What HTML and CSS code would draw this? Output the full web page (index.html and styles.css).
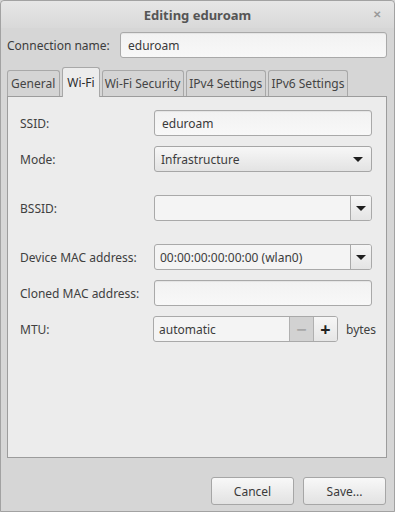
FILE: index.html
```html
<!DOCTYPE html>
<html lang="en">

<head>
    <meta charset="UTF-8">
    <title>Editing eduroam</title>
    <link rel="stylesheet" href="styles.css">
</head>

<body>
    <div class="window">
        <div class="titlebar">
            <span class="title">Editing eduroam</span>
            <span class="close">&#x2715;</span>
        </div>
        <div class="content">
            <div class="name-row">
                <label class="name-label">Connection name:</label>
                <div class="entry name-entry">eduroam</div>
            </div>
            <div class="notebook">
                <div class="tabs">
                    <span class="tab">General</span>
                    <span class="tab active">Wi-Fi</span>
                    <span class="tab">Wi-Fi Security</span>
                    <span class="tab">IPv4 Settings</span>
                    <span class="tab">IPv6 Settings</span>
                </div>
                <div class="panel">
                    <div class="row">
                        <span class="label">SSID:</span>
                        <div class="entry">eduroam</div>
                    </div>
                    <div class="row">
                        <span class="label">Mode:</span>
                        <div class="combo">
                            <span>Infrastructure</span>
                            <i class="arrow"></i>
                        </div>
                    </div>
                    <div class="row spaced">
                        <span class="label">BSSID:</span>
                        <div class="combo-entry">
                            <span class="value"></span>
                            <span class="drop"><i class="arrow"></i></span>
                        </div>
                    </div>
                    <div class="row spaced">
                        <span class="label">Device MAC address:</span>
                        <div class="combo-entry">
                            <span class="value">00:00:00:00:00:00 (wlan0)</span>
                            <span class="drop"><i class="arrow"></i></span>
                        </div>
                    </div>
                    <div class="row">
                        <span class="label">Cloned MAC address:</span>
                        <div class="entry"></div>
                    </div>
                    <div class="row">
                        <span class="label">MTU:</span>
                        <div class="mtu">
                            <div class="spin">
                                <span class="value">automatic</span>
                                <span class="step minus">&minus;</span>
                                <span class="step plus">+</span>
                            </div>
                            <span class="unit">bytes</span>
                        </div>
                    </div>
                </div>
            </div>
            <div class="buttons">
                <button class="btn">Cancel</button>
                <button class="btn">Save...</button>
            </div>
        </div>
    </div>
</body>

</html>
```

FILE: styles.css
```css
html,
body {
    margin: 0;
    padding: 0;
}

body {
    font-family: "Noto Sans", "Open Sans", sans-serif;
    font-size: 12px;
    color: #3c3c3c;
    background: #d6d6d6;
}

.window {
    width: 395px;
    height: 512px;
    box-sizing: border-box;
    border: 1px solid #a2a2a2;
    border-radius: 4px 4px 0 0;
    background: #d6d6d6;
    display: flex;
    flex-direction: column;
}

.titlebar {
    height: 27px;
    flex-shrink: 0;
    display: flex;
    align-items: center;
    justify-content: center;
    position: relative;
    background: linear-gradient(#e6e6e6, #d9d9d9);
    border-radius: 4px 4px 0 0;
}

.title {
    font-weight: bold;
    font-size: 13px;
    color: #555;
}

.close {
    position: absolute;
    right: 13px;
    top: 6px;
    font-size: 10px;
    color: #9a9a9a;
    font-weight: bold;
}

.content {
    flex: 1;
    padding: 4px 7px 6px 6px;
    display: flex;
    flex-direction: column;
}

.name-row {
    display: flex;
    align-items: center;
    gap: 12px;
}

.name-label {
    width: 101px;
    white-space: nowrap;
}

.entry {
    flex: 1;
    height: 26px;
    box-sizing: border-box;
    border: 1px solid #a9a9a9;
    border-radius: 3px;
    background: linear-gradient(#f2f2f2, #f8f8f8);
    box-shadow: inset 0 1px 1px rgba(0, 0, 0, 0.06);
    padding: 0 7px;
    display: flex;
    align-items: center;
    color: #3a3a3a;
}

.notebook {
    margin-top: 9px;
    display: flex;
    flex-direction: column;
}

.tabs {
    display: flex;
    align-items: flex-end;
    gap: 2px;
    height: 29px;
    position: relative;
    z-index: 1;
}

.tab {
    height: 26px;
    box-sizing: border-box;
    padding: 0 3px 0 2px;
    border: 1px solid #a8a8a8;
    border-bottom: none;
    border-radius: 3px 3px 0 0;
    background: #d4d4d4;
    display: flex;
    align-items: center;
    color: #444;
    white-space: nowrap;
}

.tab:first-child {
    padding: 0 4px 0 3px;
}

.tab.active {
    height: 30px;
    margin-bottom: -1px;
    background: #ececec;
    color: #2c2c2c;
    padding: 0 4px;
}

.panel {
    height: 362px;
    box-sizing: border-box;
    border: 1px solid #9c9c9c;
    background: #ececec;
    padding: 13px 14px 0 12px;
    display: flex;
    flex-direction: column;
    gap: 10px;
}

.row {
    display: flex;
    align-items: center;
}

.row.spaced {
    margin-top: 13px;
}

.label {
    width: 134px;
    flex-shrink: 0;
    color: #404040;
    white-space: nowrap;
}

.combo {
    flex: 1;
    height: 26px;
    box-sizing: border-box;
    border: 1px solid #a6a6a6;
    border-radius: 3px;
    background: linear-gradient(#f7f7f7, #e3e3e3);
    padding: 0 8px 0 6px;
    display: flex;
    align-items: center;
    justify-content: space-between;
}

.arrow {
    display: block;
    width: 0;
    height: 0;
    border-left: 5px solid transparent;
    border-right: 5px solid transparent;
    border-top: 5px solid #1e1e1e;
}

.combo-entry {
    flex: 1;
    height: 26px;
    box-sizing: border-box;
    border: 1px solid #a9a9a9;
    border-radius: 3px;
    background: #f4f4f4;
    display: flex;
    overflow: hidden;
}

.combo-entry .value {
    flex: 1;
    padding: 0 5px;
    display: flex;
    align-items: center;
}

.drop {
    width: 20px;
    border-left: 1px solid #a9a9a9;
    background: linear-gradient(#f6f6f6, #e4e4e4);
    display: flex;
    align-items: center;
    justify-content: center;
}

.mtu {
    flex: 1;
    display: flex;
    align-items: center;
    gap: 8px;
    margin-left: -1px;
}

.spin {
    width: 185px;
    height: 26px;
    box-sizing: border-box;
    border: 1px solid #a9a9a9;
    border-radius: 3px;
    background: #f4f4f4;
    display: flex;
    overflow: hidden;
}

.spin .value {
    flex: 1;
    padding: 0 5px;
    display: flex;
    align-items: center;
}

.step {
    width: 23px;
    display: flex;
    align-items: center;
    justify-content: center;
    border-left: 1px solid #b0b0b0;
    font-size: 18px;
    font-weight: bold;
}

.minus {
    background: #d2d2d2;
    color: #a8a8a8;
}

.plus {
    background: linear-gradient(#f6f6f6, #e6e6e6);
    color: #222;
}

.unit {
    color: #404040;
}

.buttons {
    margin-top: auto;
    display: flex;
    justify-content: flex-end;
    gap: 9px;
    padding-right: 1px;
}

.btn {
    width: 83px;
    height: 28px;
    font-family: inherit;
    font-size: 12px;
    color: #3a3a3a;
    border: 1px solid #a6a6a6;
    border-radius: 3px;
    background: linear-gradient(#f8f8f8, #e2e2e2);
}
```
